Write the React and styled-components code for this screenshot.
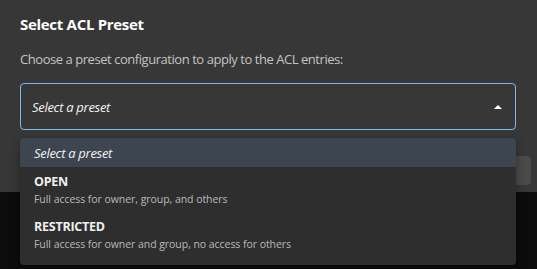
import React from 'react';
import styled, { createGlobalStyle } from 'styled-components';

const presets = [
  { name: 'OPEN', description: 'Full access for owner, group, and others' },
  { name: 'RESTRICTED', description: 'Full access for owner and group, no access for others' },
];

function App() {
  return (
    <Page>
      <GlobalStyle />
      <Dialog>
        <Title>Select ACL Preset</Title>
        <Description>Choose a preset configuration to apply to the ACL entries:</Description>
        <SelectWrap>
          <SelectBox>
            <Placeholder>Select a preset</Placeholder>
            <Arrow />
          </SelectBox>
          <Menu>
            <PlaceholderOption>Select a preset</PlaceholderOption>
            {presets.map(p => (
              <Option key={p.name}>
                <OptionName>{p.name}</OptionName>
                <OptionText>{p.description}</OptionText>
              </Option>
            ))}
          </Menu>
        </SelectWrap>
        <Actions>
          <Button>Apply</Button>
        </Actions>
      </Dialog>
    </Page>
  );
}

export default App;

const GlobalStyle = createGlobalStyle`
  body {
    margin: 0;
    background: #0c0c0c;
    font-family: 'Open Sans', 'Liberation Sans', sans-serif;
  }
`;

const Page = styled.div`
  width: 537px;
  height: 269px;
  overflow: hidden;
`;

const Dialog = styled.div`
  width: 551px;
  height: 192px;
  box-sizing: border-box;
  padding: 12px 20px 0;
  background: #373737;
`;

const Title = styled.h2`
  margin: 0;
  font-size: 15px;
  line-height: 24px;
  font-weight: 700;
  letter-spacing: -0.3px;
  color: #ffffff;
`;

const Description = styled.p`
  margin: 13px 0 0;
  font-size: 13px;
  line-height: 20px;
  letter-spacing: -0.45px;
  color: #c4c4c4;
`;

const SelectWrap = styled.div`
  position: relative;
  width: 496px;
  margin-top: 14px;
`;

const SelectBox = styled.div`
  height: 47px;
  box-sizing: border-box;
  border: 1px solid #7cb9ec;
  border-radius: 4px;
  padding: 0 12px 0 11px;
  display: flex;
  align-items: center;
  justify-content: space-between;
`;

const Placeholder = styled.span`
  font-size: 13px;
  font-style: italic;
  letter-spacing: -0.3px;
  color: #f2f2f2;
`;

const Arrow = styled.span`
  width: 0;
  height: 0;
  border-left: 4px solid transparent;
  border-right: 4px solid transparent;
  border-bottom: 4px solid #ffffff;
  margin-right: 1px;
`;

const Menu = styled.div`
  position: absolute;
  top: calc(100% + 8px);
  left: 0;
  right: 0;
  z-index: 2;
  padding-bottom: 8px;
  background: #2e2e2e;
  border-radius: 4px;
  overflow: hidden;
  box-shadow: 0 4px 10px rgba(0, 0, 0, 0.35);
`;

const PlaceholderOption = styled.div`
  height: 29px;
  display: flex;
  align-items: center;
  padding: 0 14px;
  background: #3d4550;
  font-size: 13px;
  font-style: italic;
  letter-spacing: -0.3px;
  color: #f2f2f2;
`;

const Option = styled.div`
  padding: 6px 14px 5px;
  display: flex;
  flex-direction: column;
`;

const OptionName = styled.span`
  font-size: 12.5px;
  line-height: 18px;
  font-weight: 700;
  letter-spacing: -0.25px;
  color: #f0f0f0;
`;

const OptionText = styled.span`
  font-size: 10.5px;
  line-height: 16px;
  letter-spacing: -0.05px;
  color: #b9b9b9;
`;

const Actions = styled.div`
  display: flex;
  justify-content: flex-end;
  margin-top: 26px;
`;

const Button = styled.button`
  height: 29px;
  width: 90px;
  border: 0;
  border-radius: 4px;
  background: #4a4a4a;
  color: #ffffff;
  font-family: inherit;
  font-size: 13px;
`;
